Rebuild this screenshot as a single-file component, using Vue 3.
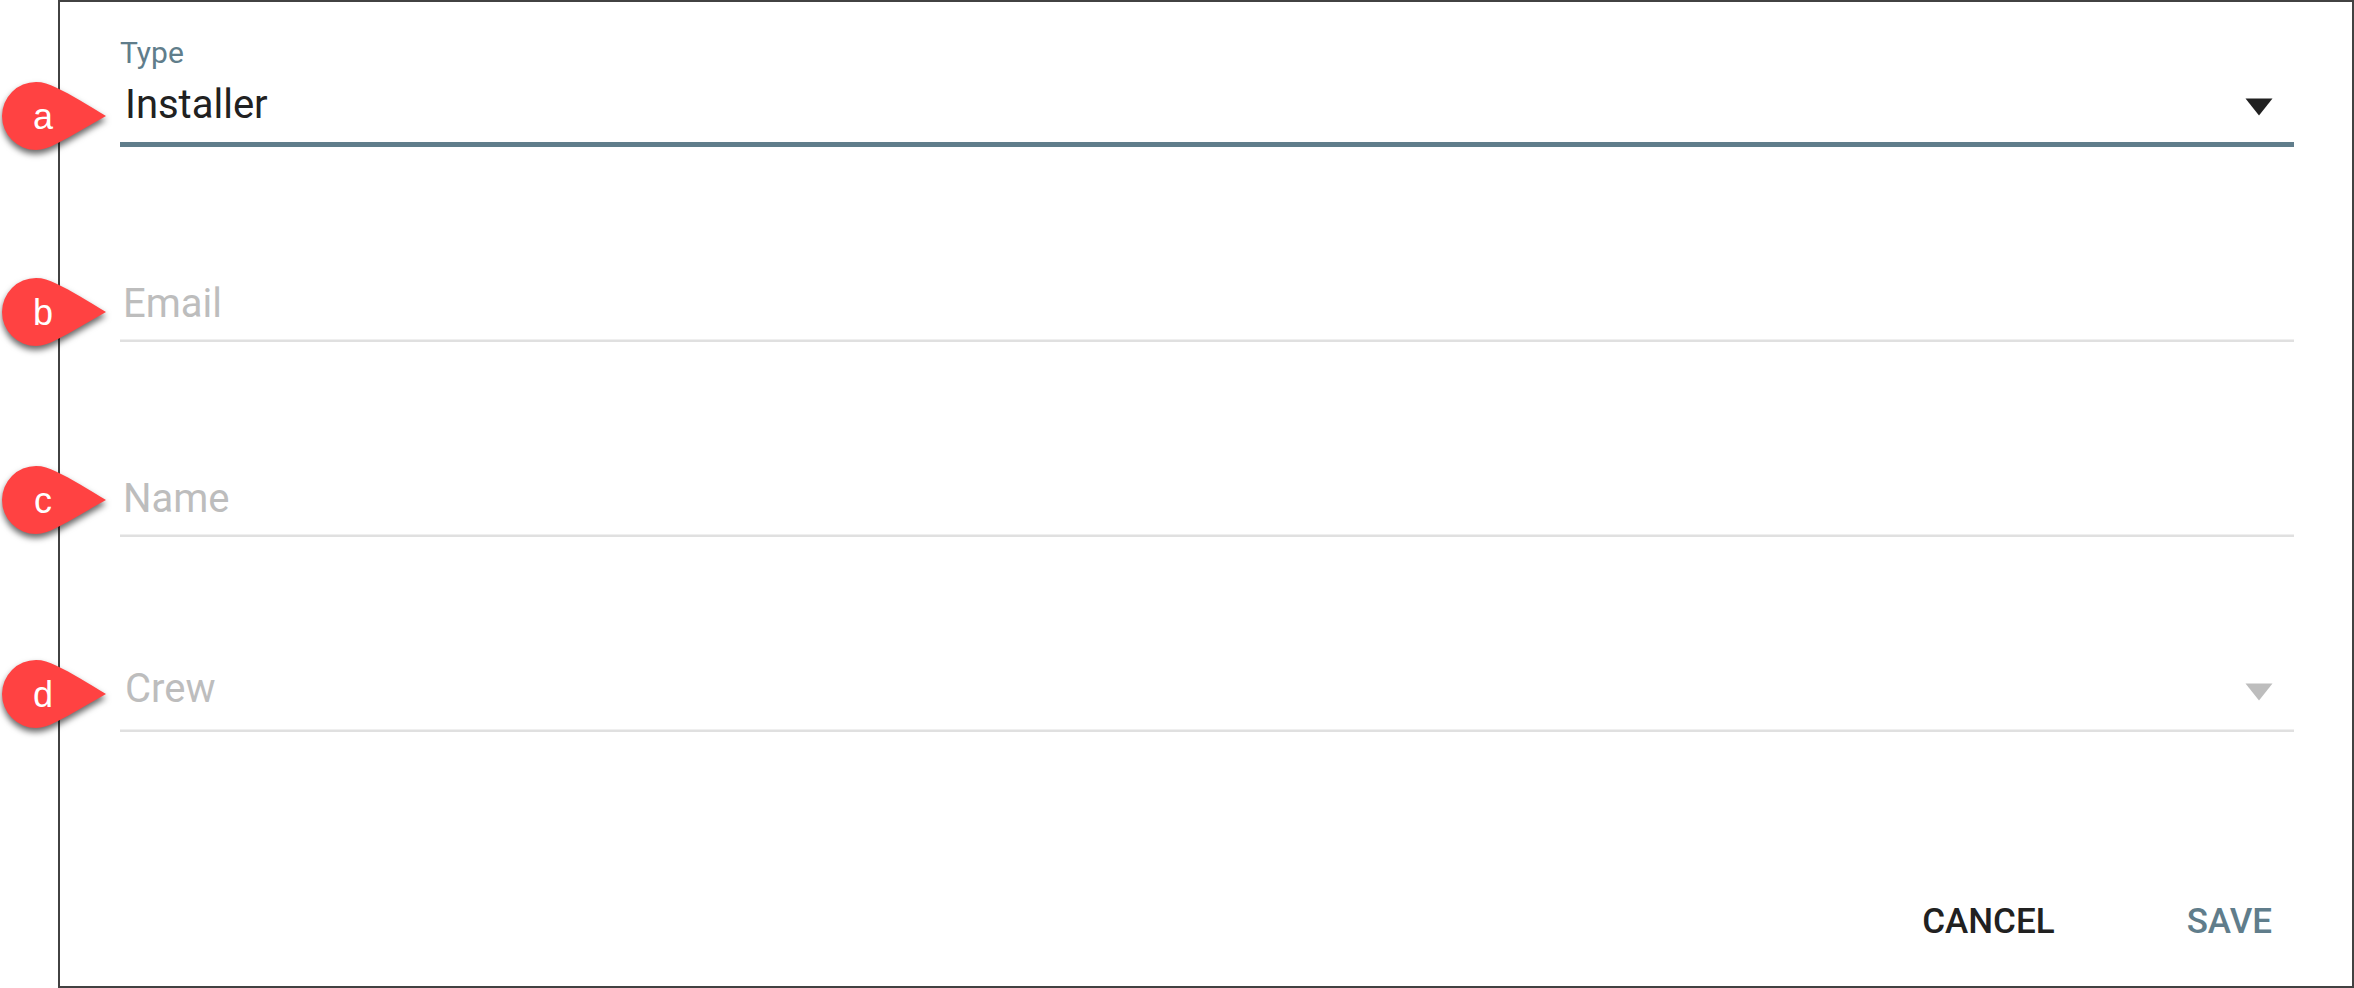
<script setup>
import { ref } from 'vue'

const type = ref('Installer')
const crew = ref('')
const email = ref('')
const name = ref('')
const pins = ['a', 'b', 'c', 'd']
</script>

<template>
  <main class="page">
    <form class="dialog" @submit.prevent>
      <div class="field field-active">
        <label class="label" for="type">Type</label>
        <div class="control">
          <select id="type" v-model="type" class="input select">
            <option>Installer</option>
          </select>
          <svg class="arrow" viewBox="0 0 28 18" aria-hidden="true"><path d="M0.5 0.5H27.5L14 17.5Z" /></svg>
        </div>
      </div>
      <div class="field">
        <input id="email" v-model="email" class="input" type="email" placeholder="Email" aria-label="Email">
      </div>
      <div class="field">
        <input id="name" v-model="name" class="input" type="text" placeholder="Name" aria-label="Name">
      </div>
      <div class="field">
        <div class="control">
          <select id="crew" v-model="crew" class="input select select-empty" aria-label="Crew">
            <option value="">Crew</option>
          </select>
          <svg class="arrow arrow-empty" viewBox="0 0 28 18" aria-hidden="true"><path d="M0.5 0.5H27.5L14 17.5Z" /></svg>
        </div>
      </div>
      <div class="actions">
        <button class="button" type="button">CANCEL</button>
        <button class="button button-primary" type="submit">SAVE</button>
      </div>
    </form>

    <div v-for="pin in pins" :key="pin" class="pin" :class="`pin-${pin}`">
      <svg class="pin-shape" viewBox="0 0 108 72" aria-hidden="true">
        <path d="M106 36C88 46 72 56 56 64C49 67.500 43 70 36 70A34 34 0 0 1 36 2C43 2 49 4 56 7.500C72 15 88 25 106 36Z" />
      </svg>
      <span class="pin-text">{{ pin }}</span>
    </div>
  </main>
</template>

<style>
body {
  background: #fff;
}
</style>

<style scoped>
.page {
  position: relative;
  box-sizing: border-box;
  min-height: 100vh;
  padding-left: 58px;
  display: flex;
  font-family: Roboto, "Liberation Sans", sans-serif;
  color: #212121;
}

.dialog {
  flex: 1;
  box-sizing: border-box;
  display: flex;
  flex-direction: column;
  padding: 33px 58px 31px 60px;
  border: 2px solid #424242;
}

.field {
  display: flex;
  flex-direction: column;
  justify-content: flex-end;
  min-height: 195px;
}

.field-active {
  min-height: 0;
}

.label {
  margin-bottom: 10px;
  font-size: 30px;
  line-height: 36px;
  color: #607d8b;
}

.control {
  position: relative;
}

.input {
  display: block;
  box-sizing: border-box;
  width: 100%;
  height: 63px;
  margin: 0;
  padding: 0 3px 13px;
  border: 0;
  border-bottom: 2px solid #e0e0e0;
  border-radius: 0;
  outline: 0;
  background: transparent;
  box-shadow: inset 0 -1px #efefef;
  font: 400 40px/48px Roboto, "Liberation Sans", sans-serif;
  color: #212121;
}

.input::placeholder {
  color: #bdbdbd;
  opacity: 1;
}

.select {
  appearance: none;
  height: 67px;
  padding: 0 60px 17px 5px;
}

.select-empty {
  color: #bdbdbd;
}

.field-active .select {
  height: 66px;
  padding-bottom: 13px;
  border-bottom: 5px solid #607d8b;
  box-shadow: none;
}

.arrow {
  position: absolute;
  right: 21px;
  bottom: 31px;
  width: 28px;
  height: 18px;
  fill: #212121;
  pointer-events: none;
}

.arrow-empty {
  fill: #bdbdbd;
}

.actions {
  display: flex;
  justify-content: flex-end;
  gap: 88px;
  margin-top: auto;
}

.button {
  padding: 12px 22px;
  border: 0;
  background: transparent;
  font: 500 35px/42px Roboto, "Liberation Sans", sans-serif;
  color: #212121;
}

.button-primary {
  color: #607d8b;
}

.pin {
  position: absolute;
  left: 0;
  width: 108px;
  height: 72px;
}

.pin-a {
  top: 80px;
}

.pin-b {
  top: 276px;
}

.pin-c {
  top: 464px;
}

.pin-d {
  top: 658px;
}

.pin-shape {
  display: block;
  width: 108px;
  height: 72px;
  overflow: visible;
  fill: #ff4242;
  filter: drop-shadow(0 4px 3px rgba(0, 0, 0, 0.6));
}

.pin-text {
  position: absolute;
  top: 16px;
  left: 0;
  width: 86px;
  font-family: "Liberation Sans", Arial, sans-serif;
  font-size: 36px;
  line-height: 42px;
  text-align: center;
  color: #fff;
}
</style>
